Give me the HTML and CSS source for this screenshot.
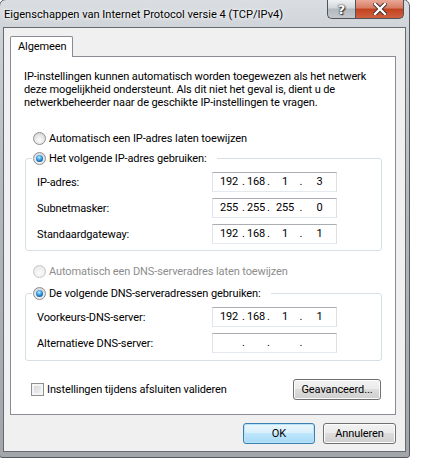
FILE: index.html
```html
<!DOCTYPE html>
<html lang="nl">
<head>
<meta charset="UTF-8">
<title>Eigenschappen van Internet Protocol versie 4 (TCP/IPv4)</title>
<link rel="stylesheet" href="styles.css">
</head>
<body>

<div class="window">
  <div class="titlebar">
    <span class="title">Eigenschappen van Internet Protocol versie 4 (TCP/IPv4)</span>
    <div class="caption-btns">
      <div class="cap help">?</div>
      <div class="cap close">
        <svg width="14" height="12" viewBox="0 0 14 12">
          <path d="M2 1 L12 11 M12 1 L2 11" stroke="#3a2a28" stroke-width="4.2" stroke-linecap="square"/>
          <path d="M2 1 L12 11 M12 1 L2 11" stroke="#fff" stroke-width="2.4" stroke-linecap="square"/>
        </svg>
      </div>
    </div>
  </div>

  <div class="client">
    <div class="tabs">
      <div class="tab">Algemeen</div>
    </div>

    <div class="panel">
      <p class="desc">IP-instellingen kunnen automatisch worden toegewezen als het netwerk<br>deze mogelijkheid ondersteunt. Als dit niet het geval is, dient u de<br>netwerkbeheerder naar de geschikte IP-instellingen te vragen.</p>

      <div class="option first"><span class="radio"></span>Automatisch een IP-adres laten toewijzen</div>

      <div class="group">
        <div class="option group-head"><span class="radio checked"></span>Het volgende IP-adres gebruiken:</div>
        <div class="field">
          <span>IP-adres:</span>
          <div class="ip"><span>192</span><span>.</span><span>168</span><span>.</span><span>1</span><span>.</span><span>3</span></div>
        </div>
        <div class="field">
          <span>Subnetmasker:</span>
          <div class="ip"><span>255</span><span>.</span><span>255</span><span>.</span><span>255</span><span>.</span><span>0</span></div>
        </div>
        <div class="field">
          <span>Standaardgateway:</span>
          <div class="ip"><span>192</span><span>.</span><span>168</span><span>.</span><span>1</span><span>.</span><span>1</span></div>
        </div>
      </div>

      <div class="option disabled"><span class="radio"></span>Automatisch een DNS-serveradres laten toewijzen</div>

      <div class="group dns">
        <div class="option group-head"><span class="radio checked"></span>De volgende DNS-serveradressen gebruiken:</div>
        <div class="field">
          <span>Voorkeurs-DNS-server:</span>
          <div class="ip"><span>192</span><span>.</span><span>168</span><span>.</span><span>1</span><span>.</span><span>1</span></div>
        </div>
        <div class="field">
          <span>Alternatieve DNS-server:</span>
          <div class="ip"><span></span><span>.</span><span></span><span>.</span><span></span><span>.</span><span></span></div>
        </div>
      </div>

      <div class="panel-foot">
        <div class="check"><span class="box"></span>Instellingen tijdens afsluiten valideren</div>
        <button class="btn advanced">Geavanceerd...</button>
      </div>
    </div>

    <div class="actions">
      <button class="btn default">OK</button>
      <button class="btn">Annuleren</button>
    </div>
  </div>
</div>

</body>
</html>
```

FILE: styles.css
```css
body {
  margin: 0;
  background: #fff;
  font-family: Roboto, "Noto Sans", sans-serif;
  font-size: 11px;
  letter-spacing: -0.1px;
  color: #000;
}

/* Venster met Aero-rand */
.window {
  box-sizing: border-box;
  width: 411px;
  height: 459px;
  margin: -1px 0 0 -1px;
  padding: 0 3px 5px 3px;
  border: 1px solid #55595e;
  border-radius: 7px 7px 3px 3px;
  background: linear-gradient(#dadee2, #cbd0d5 40px, #b3b8bd 200px, #a2a6aa);
}
.titlebar {
  display: flex;
  justify-content: space-between;
  align-items: flex-start;
  height: 27px;
  margin: 0 -3px;
}
.title {
  padding: 6px 0 0 4px;
  font-size: 11.1px;
  letter-spacing: 0;
  line-height: 17px;
  white-space: nowrap;
  text-shadow: 0 0 6px #fff, 0 0 3px #fff;
}
.caption-btns {
  display: flex;
  margin-right: 5px;
}
.cap {
  box-sizing: border-box;
  height: 19px;
  display: flex;
  justify-content: center;
  align-items: center;
  border: 1px solid #4f545a;
  border-top: none;
}
.help {
  width: 28px;
  border-right: none;
  border-radius: 0 0 0 5px;
  background: linear-gradient(#eef0f2, #d2d6da 45%, #b2b8be 50%, #c3c8cd);
  color: #fff;
  font-family: "DejaVu Sans", sans-serif;
  font-weight: bold;
  font-size: 13px;
  text-shadow: 0 0 1px #333, 0 0 2px #333, 1px 1px 1px #333;
}
.close {
  width: 49px;
  border-radius: 0 0 5px 0;
  background: linear-gradient(#e9a897, #d77c64 45%, #c2421f 50%, #d0603f);
}

/* Clientgebied */
.client {
  box-sizing: border-box;
  height: 425px;
  border: 1px solid #666a6f;
  background: #f0f0f0;
}
.tabs {
  display: flex;
  margin: 8px 0 0 6px;
}
.tab {
  box-sizing: border-box;
  position: relative;
  z-index: 1;
  width: 63px;
  height: 21px;
  margin-bottom: -1px;
  padding-left: 7px;
  line-height: 20px;
  border: 1px solid #898c95;
  border-bottom: none;
  border-radius: 2px 2px 0 0;
  background: #fff;
}
.panel {
  box-sizing: border-box;
  width: 386px;
  height: 359px;
  margin-left: 6px;
  border: 1px solid #898c95;
  background: #fff;
}
.desc {
  margin: 0;
  padding: 13px 0 0 13px;
  line-height: 13px;
  white-space: nowrap;
}

/* Keuzerondjes */
.option {
  display: flex;
  align-items: center;
  height: 16px;
}
.option.first {
  margin: 21px 0 0 22px;
}
.option.disabled {
  margin: 12px 0 0 22px;
  color: #8d8d8d;
}
.radio {
  box-sizing: border-box;
  position: relative;
  width: 13px;
  height: 13px;
  margin-right: 3px;
  border: 1px solid #8e8f8f;
  border-radius: 50%;
  background: radial-gradient(circle at 50% 65%, #fdfdfd, #e4e4e4 55%, #c9c9c9);
}
.disabled .radio {
  border-color: #c6c6c6;
  background: radial-gradient(circle at 50% 65%, #fbfbfb, #eeeeee 60%, #e2e2e2);
}
.radio.checked::after {
  content: "";
  position: absolute;
  top: 2px; left: 2px;
  width: 7px; height: 7px;
  border-radius: 50%;
  background: radial-gradient(circle at 45% 35%, #c6ecff, #3aa2e6 40%, #0f5aa3 75%, #0a3a70);
}

/* Groepsvakken */
.group {
  box-sizing: border-box;
  width: 357px;
  margin: 12px 0 0 14px;
  padding-bottom: 6px;
  border: 1px solid #d5dfe5;
  border-radius: 3px;
}
.group.dns {
  margin-top: 14px;
  padding-bottom: 7px;
}
.group-head {
  align-self: flex-start;
  width: max-content;
  margin: -9px 0 0 6px;
  padding: 0 10px 0 1px;
  background: #fff;
}
.field {
  display: flex;
  justify-content: space-between;
  align-items: center;
  height: 20px;
  margin-top: 6px;
  padding: 0 44px 0 11px;
}
.ip {
  box-sizing: border-box;
  display: grid;
  grid-template-columns: 24px 5px 20px 5px 28px 4px 33px;
  width: 125px;
  height: 20px;
  padding-left: 4px;
  line-height: 18px;
  text-align: center;
  border: 1px solid;
  border-color: #abadb3 #dbdfe6 #e3e9ef #e2e3ea;
}

/* Onderkant paneel */
.panel-foot {
  display: flex;
  justify-content: space-between;
  align-items: center;
  margin-top: 18px;
  padding: 0 14px 0 20px;
}
.check {
  display: flex;
  align-items: center;
}
.box {
  box-sizing: border-box;
  width: 13px;
  height: 13px;
  margin-right: 3px;
  border: 1px solid #8e8f8f;
  background: linear-gradient(135deg, #cfd2d6, #f7f7f7);
  box-shadow: inset 0 0 0 2px #f4f4f4;
}
.btn {
  box-sizing: border-box;
  height: 21px;
  padding: 0;
  font-family: inherit;
  font-size: 11px;
  letter-spacing: -0.1px;
  color: #000;
  border: 1px solid #707070;
  border-radius: 3px;
  background: linear-gradient(#f2f2f2, #ebebeb 45%, #dddddd 50%, #cfcfcf);
  box-shadow: inset 0 0 0 1px #fcfcfc;
}
.advanced { width: 88px; }
.actions {
  display: flex;
  justify-content: flex-end;
  gap: 8px;
  margin-top: 8px;
  padding-right: 9px;
}
.actions .btn { width: 73px; }
.actions .default {
  width: 72px;
  border-color: #3c7fb1;
  background: linear-gradient(#eaf6fd, #d9f0fc 45%, #bee6fd 50%, #a7d9f5);
  box-shadow: inset 0 0 0 1px #b9e3f9;
}
```
